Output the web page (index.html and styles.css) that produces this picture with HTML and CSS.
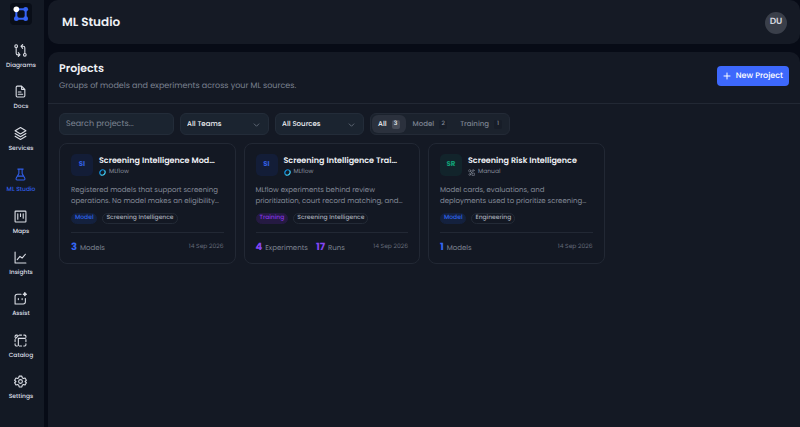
FILE: index.html
```html
<!DOCTYPE html>
<html lang="en">
<head>
  <meta charset="UTF-8">
  <meta name="viewport" content="width=device-width, initial-scale=1.0">
  <title>ML Studio</title>
  <link rel="stylesheet" href="styles.css">
</head>
<body>
  <aside class="sidebar">
    <a href="#" class="logo" aria-label="Home">
      <svg viewBox="0 0 24 24"><path d="M5 5h14v14H5z" stroke="#3563f5" stroke-width="3"/><g fill="#3563f5"><circle cx="19" cy="5" r="3.6"/><circle cx="19" cy="19" r="3.6"/><circle cx="5" cy="19" r="3.6"/></g><circle cx="5" cy="5" r="4.2" fill="#fff"/></svg>
    </a>
    <nav class="nav">
      <a href="#"><svg viewBox="0 0 24 24"><circle cx="4" cy="4" r="2.5"/><circle cx="20" cy="20" r="2.5"/><path d="M4 7v10a3 3 0 0 0 3 3h4M8 16l3 4-3 3M20 17V7a3 3 0 0 0-3-3h-4M16 1l-3 3 3 4"/></svg>Diagrams</a>
      <a href="#"><svg viewBox="0 0 24 24"><path d="M14 2H6a2 2 0 0 0-2 2v16a2 2 0 0 0 2 2h12a2 2 0 0 0 2-2V8zM14 2v6h6M8 13h5M8 17h8"/></svg>Docs</a>
      <a href="#"><svg viewBox="0 0 24 24"><path d="M12 1 2 7l10 6 10-6zM2 12l10 6 10-6M2 17l10 6 10-6"/></svg>Services</a>
      <a href="#" class="active"><svg viewBox="0 0 24 24"><path d="M7 2h10M9 2v8L4 19a2 2 0 0 0 2 3h12a2 2 0 0 0 2-3l-5-9V2M6 15h12"/></svg>ML Studio</a>
      <a href="#"><svg viewBox="0 0 24 24"><rect x="2" y="2" width="20" height="20" rx="1"/><path d="M7 7v10M12 7v5M17 7v8"/></svg>Maps</a>
      <a href="#"><svg viewBox="0 0 24 24"><path d="M2 2v20h20M6 16l5-6 4 3 6-7"/></svg>Insights</a>
      <a href="#"><svg viewBox="0 0 24 24"><path d="M13 4H6a4 4 0 0 0-4 4v14h15a4 4 0 0 0 4-4v-6M8 12v2M15 12v2"/><path d="m20 1 1 2 2 1-2 1-1 2-1-2-2-1 2-1z" fill="currentColor"/></svg>Assist</a>
      <a href="#"><svg viewBox="0 0 24 24"><path d="M2 6V4a2 2 0 0 1 2-2h2M10 2h4M18 2h2a2 2 0 0 1 2 2v2M22 10v4M22 18v2a2 2 0 0 1-2 2h-2M14 22h-4M6 22H4a2 2 0 0 1-2-2v-2M2 14v-4M8 21V8M8 8h13M3 8l5-5"/></svg>Catalog</a>
      <a href="#"><svg viewBox="0 0 24 24"><path d="m9.500 2-.7 3-2.200 1.300-3-.9L1.200 9.700l2.300 2.300-2.300 2.300 2.400 4.300 3-.9L8.800 19l.7 3h5l.7-3 2.200-1.300 3 .9 2.400-4.300-2.300-2.300 2.300-2.300-2.400-4.300-3 .9L15.200 5l-.7-3z"/><circle cx="12" cy="12" r="3.500"/></svg>Settings</a>
    </nav>
  </aside>

  <div class="page">
    <header class="topbar">
      <h1>ML Studio</h1>
      <button class="avatar" type="button">DU</button>
    </header>

    <main class="panel">
      <div class="panel-header">
        <div>
          <h2>Projects</h2>
          <p>Groups of models and experiments across your ML sources.</p>
        </div>
        <button class="new-project" type="button">
          <svg viewBox="0 0 24 24"><path d="M12 3v18M3 12h18"/></svg>
          New Project
        </button>
      </div>

      <div class="content">
        <div class="filters">
          <input class="search" type="text" placeholder="Search projects..." aria-label="Search projects">
          <select class="filter-select" aria-label="Team"><option>All Teams</option></select>
          <select class="filter-select" aria-label="Source"><option>All Sources</option></select>
          <div class="tabs">
            <button type="button" class="tab selected">All <span>3</span></button>
            <button type="button" class="tab">Model <span>2</span></button>
            <button type="button" class="tab">Training <span>1</span></button>
          </div>
        </div>

        <div class="cards">
          <article class="card">
            <div class="card-head">
              <div class="badge">SI</div>
              <div>
                <h3>Screening Intelligence Mod…</h3>
                <div class="source"><svg class="mlflow" viewBox="0 0 24 24"><path d="M5 19A10 10 0 0 1 19 5"/><path class="light" d="M19 5A10 10 0 0 1 5 19"/></svg>MLflow</div>
              </div>
            </div>
            <p class="desc">Registered models that support screening<br>operations. No model makes an eligibility…</p>
            <div class="tags"><span class="tag model">Model</span><span class="tag">Screening Intelligence</span></div>
            <div class="card-foot">
              <span class="stat"><b>3</b>Models</span>
              <time datetime="2026-09-14">14 Sep 2026</time>
            </div>
          </article>

          <article class="card">
            <div class="card-head">
              <div class="badge">SI</div>
              <div>
                <h3>Screening Intelligence Trai…</h3>
                <div class="source"><svg class="mlflow" viewBox="0 0 24 24"><path d="M5 19A10 10 0 0 1 19 5"/><path class="light" d="M19 5A10 10 0 0 1 5 19"/></svg>MLflow</div>
              </div>
            </div>
            <p class="desc">MLflow experiments behind review<br>prioritization, court record matching, and…</p>
            <div class="tags"><span class="tag training">Training</span><span class="tag">Screening Intelligence</span></div>
            <div class="card-foot purple">
              <span class="stat"><b>4</b>Experiments</span>
              <span class="stat"><b>17</b>Runs</span>
              <time datetime="2026-09-14">14 Sep 2026</time>
            </div>
          </article>

          <article class="card">
            <div class="card-head">
              <div class="badge green">SR</div>
              <div>
                <h3>Screening Risk Intelligence</h3>
                <div class="source"><svg viewBox="0 0 24 24"><circle cx="6" cy="6" r="4"/><circle cx="18" cy="5" r="3"/><circle cx="6" cy="19" r="3"/><path d="M9 9l6 6M15 8l-6 8M15 14h7v8h-7z"/></svg>Manual</div>
              </div>
            </div>
            <p class="desc">Model cards, evaluations, and<br>deployments used to prioritize screening…</p>
            <div class="tags"><span class="tag model">Model</span><span class="tag">Engineering</span></div>
            <div class="card-foot">
              <span class="stat"><b>1</b>Models</span>
              <time datetime="2026-09-14">14 Sep 2026</time>
            </div>
          </article>
        </div>
      </div>
    </main>
  </div>
</body>
</html>
```
FILE: styles.css
```css
* {
  box-sizing: border-box;
}
body {
  margin: 0;
  display: flex;
  gap: 4px;
  min-height: 100vh;
  background: #070b16;
  color: #eef0f5;
  font-family: Poppins, Inter, sans-serif;
  font-size: 8px;
  text-rendering: geometricPrecision;
}
h1, h2, h3, p {
  margin: 0;
}
a {
  color: inherit;
  text-decoration: none;
}
button, input, select {
  font: inherit;
  color: inherit;
  border: 0;
  text-rendering: inherit;
}
svg {
  flex: none;
  fill: none;
  stroke: currentColor;
  stroke-width: 2;
  stroke-linecap: round;
  stroke-linejoin: round;
}

/* Sidebar */
.sidebar {
  flex: 0 0 44px;
  display: flex;
  flex-direction: column;
  align-items: center;
  padding: 3px 2px 26px 0;
  background: #131924;
}
.logo {
  display: flex;
  align-items: center;
  justify-content: center;
  width: 22px;
  height: 22px;
  margin-bottom: 19px;
  border-radius: 4px;
  background: #090e18;
}
.logo svg {
  width: 16px;
  height: 16px;
  stroke: none;
}
.nav {
  flex: 1;
  display: flex;
  flex-direction: column;
  justify-content: space-between;
  color: #dcdfe6;
}
.nav a {
  display: flex;
  flex-direction: column;
  align-items: center;
  gap: 5px;
  font-size: 6px;
  line-height: 8px;
  font-weight: 500;
}
.nav svg {
  width: 13px;
  height: 13px;
}
.nav .active {
  color: #315ee8;
}

/* Page */
.page {
  flex: 1;
  min-width: 0;
  display: flex;
  flex-direction: column;
  gap: 8px;
}
.topbar {
  display: flex;
  align-items: center;
  justify-content: space-between;
  height: 44px;
  padding: 1px 13px 0 14px;
  border-radius: 10px;
  background: #151a25;
}
.topbar h1 {
  font-size: 12px;
  line-height: 16px;
  font-weight: 600;
}
.avatar {
  width: 22px;
  height: 22px;
  padding: 0;
  border-radius: 50%;
  background: #3a3f4a;
  color: #d3d6de;
  font-size: 9px;
  font-weight: 600;
}
.panel {
  flex: 1;
  border-radius: 10px 10px 0 0;
  background: #141924;
}
.panel-header {
  display: flex;
  align-items: center;
  justify-content: space-between;
  height: 52px;
  padding: 0 11px 4px;
  border-bottom: 1px solid #222834;
}
.panel-header h2 {
  font-size: 11px;
  line-height: 16px;
  font-weight: 600;
}
.panel-header p {
  margin-top: 4px;
  line-height: 12px;
  color: #7b8190;
}
.new-project {
  display: flex;
  align-items: center;
  gap: 5px;
  height: 20px;
  padding: 0 6px;
  border-radius: 4px;
  background: #3d68fc;
  color: #fff;
  font-weight: 500;
}
.new-project svg {
  width: 8px;
  height: 8px;
  stroke-width: 3;
}
.content {
  padding: 9px 11px;
}

/* Filters */
.filters {
  display: flex;
  gap: 6px;
  margin-bottom: 8px;
}
.search, .filter-select {
  height: 22px;
  padding: 0 6px;
  border: 1px solid #232c39;
  border-radius: 6px;
  background-color: #1b2430;
}
.search {
  width: 115px;
}
.search::placeholder {
  color: #7d8593;
}
.filter-select {
  width: 89px;
  appearance: none;
  font-size: 7px;
  font-weight: 500;
  background-image: url("data:image/svg+xml,%3Csvg xmlns='http://www.w3.org/2000/svg' viewBox='0 0 8 8'%3E%3Cpath d='M1 3l3 3 3-3' fill='none' stroke='%23666e7c'/%3E%3C/svg%3E");
  background-repeat: no-repeat;
  background-position: right 8px center;
  background-size: 7px 7px;
}
.tabs {
  display: flex;
  gap: 1px;
  height: 22px;
  padding: 1px;
  border: 1px solid #232a36;
  border-radius: 6px;
  background: #1b222d;
}
.tab {
  display: flex;
  align-items: center;
  gap: 5px;
  padding: 1px 6px 0;
  border-radius: 6px;
  background: none;
  color: #7d8492;
  font-size: 7px;
  font-weight: 500;
}
.tab span {
  min-width: 8px;
  padding: 0 2px;
  border-radius: 2px;
  background: #171d28;
  font-size: 6px;
  line-height: 9px;
  text-align: center;
}
.tab.selected {
  background: #2b313d;
  color: #f2f3f7;
}
.tab.selected span {
  background: #474c58;
}

/* Cards */
.cards {
  display: grid;
  grid-template-columns: repeat(4, minmax(0, 1fr));
  gap: 8px;
}
.card {
  padding: 10px 11px 8px;
  border: 1px solid #222834;
  border-radius: 8px;
  background: #131823;
}
.card-head {
  display: flex;
  gap: 6px;
}
.badge {
  display: flex;
  align-items: center;
  justify-content: center;
  width: 22px;
  height: 22px;
  border-radius: 5px;
  background: #131d37;
  color: #315de0;
  font-size: 7px;
  font-weight: 700;
}
.badge.green {
  background: #12242b;
  color: #10a176;
}
.card h3 {
  font-size: 8px;
  line-height: 13px;
  font-weight: 600;
  white-space: nowrap;
}
.source {
  display: flex;
  align-items: center;
  gap: 3px;
  font-size: 6px;
  line-height: 10px;
  color: #858b99;
}
.source svg {
  width: 7px;
  height: 7px;
}
.mlflow {
  stroke: #118fda;
  stroke-width: 4;
  stroke-linecap: butt;
  overflow: visible;
}
.mlflow .light {
  stroke: #3fc7ef;
}
.desc {
  margin-top: 8px;
  font-size: 7px;
  line-height: 11px;
  color: #858b99;
  white-space: nowrap;
}
.tags {
  display: flex;
  gap: 5px;
  margin-top: 6px;
}
.tag {
  padding: 0 3px;
  border: 1px solid #232a36;
  border-radius: 6px;
  color: #a6abb7;
  font-size: 6px;
  line-height: 9px;
  font-weight: 500;
}
.tag.model {
  border-color: #14213e;
  background: #14213e;
  color: #2f62e8;
}
.tag.training {
  border-color: #251a42;
  background: #251a42;
  color: #8634e4;
}
.card-foot {
  display: flex;
  align-items: center;
  gap: 8px;
  margin-top: 8px;
  padding-top: 7px;
  border-top: 1px solid #222834;
}
.stat {
  display: flex;
  align-items: baseline;
  gap: 3px;
  font-size: 7px;
  line-height: 13px;
  color: #7e8492;
}
.stat b {
  font-size: 10px;
  font-weight: 700;
  color: #3567f5;
}
.purple b {
  color: #8546f5;
}
.card-foot time {
  margin-left: auto;
  font-size: 6px;
  color: #636a78;
}
```
